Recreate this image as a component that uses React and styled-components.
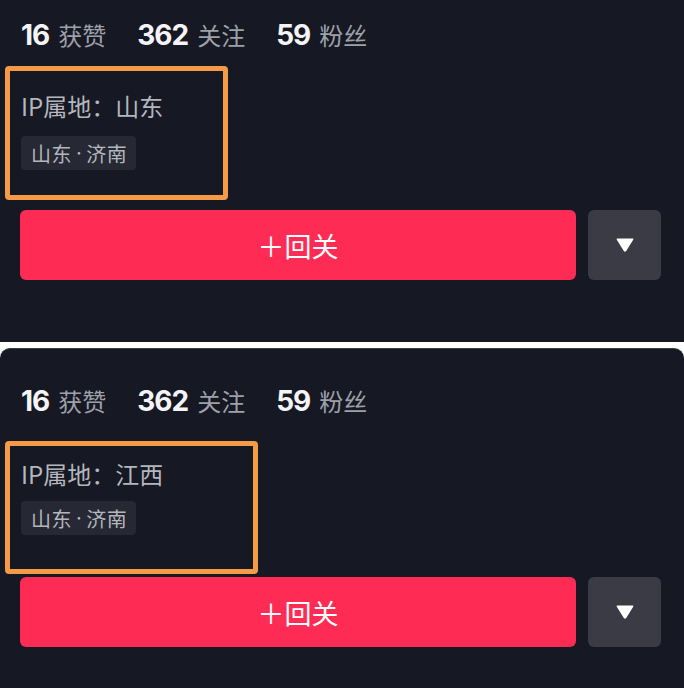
import styled, { createGlobalStyle } from "styled-components";

const GlobalStyle = createGlobalStyle`
  html, body {
    margin: 0;
    padding: 0;
    background: #ffffff;
  }
  body {
    width: 684px;
    height: 688px;
    overflow: hidden;
    font-family: "Noto Sans CJK SC", "Noto Sans", sans-serif;
  }
`

const Page = styled.div`
  display: flex;
  flex-direction: column;
  gap: 6px;
`

const Panel = styled.section`
  height: ${props => props.$height}px;
  box-sizing: border-box;
  background: #161823;
  padding: ${props => props.$top}px 0 0 5px;
  overflow: hidden;
  border-radius: ${props => props.$rounded ? "10px 10px 0 0" : "0"};
  border-top: ${props => props.$rounded ? "1px solid #3a3c46" : "none"};
`

const Stats = styled.div`
  display: flex;
  align-items: baseline;
  gap: 31px;
  margin-left: 16px;
  line-height: 34px;
`

const Stat = styled.div`
  display: flex;
  align-items: baseline;
  gap: 9px;
`

const Count = styled.span`
  font-family: "Inter", "Roboto", sans-serif;
  font-weight: 700;
  font-size: 28px;
  color: #f4f4f6;
  letter-spacing: -1px;
`

const Label = styled.span`
  font-family: "Noto Sans CJK SC", sans-serif;
  font-size: 24px;
  color: #9fa1a9;
`

const HighlightBox = styled.div`
  box-sizing: border-box;
  width: ${props => props.$width}px;
  height: ${props => props.$boxHeight}px;
  margin-top: ${props => props.$gap}px;
  border: 5px solid #f59a46;
  border-radius: 4px;
  padding: ${props => props.$padTop}px 11px 0 11px;
  display: flex;
  flex-direction: column;
  align-items: flex-start;
  gap: ${props => props.$inner}px;
`

const IpText = styled.div`
  font-size: 24px;
  line-height: 32px;
  color: #b4b6bd;
`

const Tag = styled.div`
  height: 34px;
  box-sizing: border-box;
  padding: 0 9px 0 10px;
  display: flex;
  align-items: center;
  background: #262833;
  border-radius: 4px;
  font-size: 20px;
  color: #b4b6bd;
  letter-spacing: 0.5px;
`

const Dot = styled.span`
  font-family: "Inter", sans-serif;
  margin: 0 4px;
`

const Actions = styled.div`
  display: flex;
  gap: 12px;
  margin: ${props => props.$gap}px 0 0 15px;
`

const FollowButton = styled.button`
  width: 556px;
  height: 70px;
  border: none;
  border-radius: 6px;
  background: #fe2c55;
  color: #ffffff;
  font-family: "Noto Sans CJK SC", sans-serif;
  font-size: 27px;
  display: flex;
  align-items: center;
  justify-content: center;
  padding: 0;
`

const MoreButton = styled.button`
  width: 73px;
  height: 70px;
  border: none;
  border-radius: 6px;
  background: #3a3b44;
  display: flex;
  align-items: center;
  justify-content: center;
  padding: 0;
`

const profiles = [
  { ip: "山东", height: 342, top: 18, box: 223, boxHeight: 134, gap: 14, padTop: 19, inner: 14, action: 10 },
  { ip: "江西", height: 340, top: 35, box: 253, boxHeight: 133, gap: 23, padTop: 12, inner: 11, action: 3, rounded: true },
]

function Caret() {
  return (
    <svg width="20" height="16" viewBox="0 0 20 16">
      <path d="M2.5 1.5 H17.5 Q19 1.5 18.2 2.8 L11.2 14 Q10 15.6 8.8 14 L1.8 2.8 Q1 1.5 2.5 1.5 Z" fill="#ffffff" />
    </svg>
  )
}

function ProfilePanel({ p }) {
  return (
    <Panel $height={p.height} $top={p.top} $rounded={p.rounded}>
      <Stats>
        <Stat><Count>16</Count><Label>获赞</Label></Stat>
        <Stat><Count>362</Count><Label>关注</Label></Stat>
        <Stat><Count>59</Count><Label>粉丝</Label></Stat>
      </Stats>
      <HighlightBox $width={p.box} $boxHeight={p.boxHeight} $gap={p.gap} $padTop={p.padTop} $inner={p.inner}>
        <IpText>IP属地：{p.ip}</IpText>
        <Tag>山东<Dot>·</Dot>济南</Tag>
      </HighlightBox>
      <Actions $gap={p.action}>
        <FollowButton>＋回关</FollowButton>
        <MoreButton><Caret /></MoreButton>
      </Actions>
    </Panel>
  )
}

export default function App() {
  return (
    <>
      <GlobalStyle />
      <Page>
        {profiles.map(p => <ProfilePanel key={p.ip} p={p} />)}
      </Page>
    </>
  )
}
